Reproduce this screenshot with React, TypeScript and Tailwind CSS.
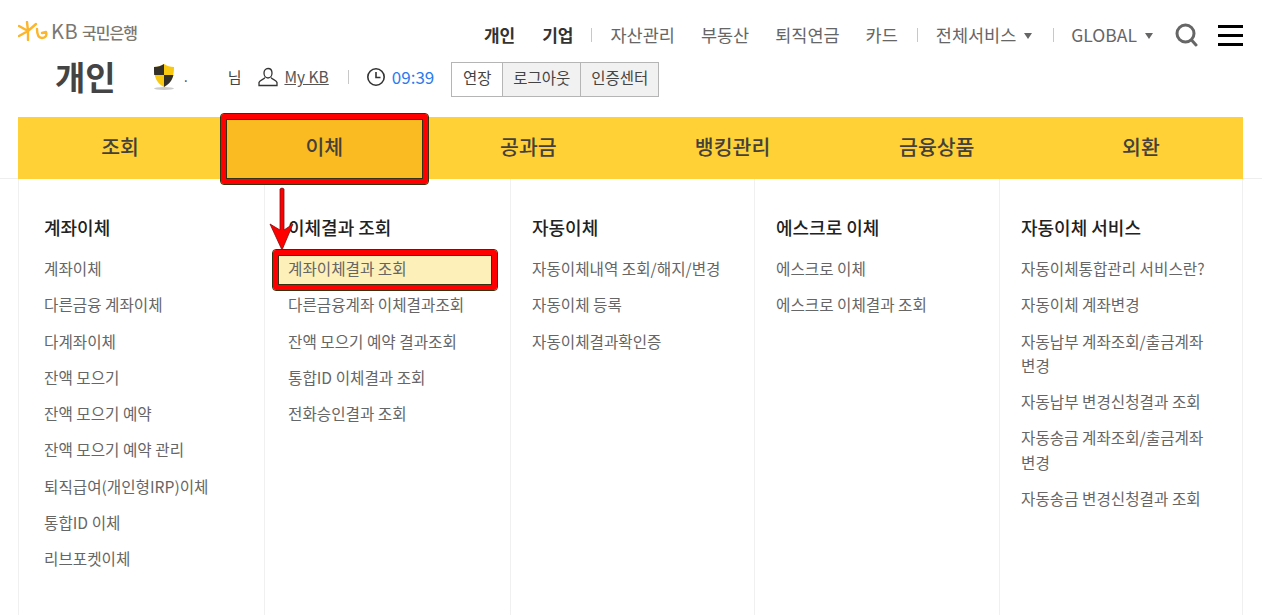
// App.tsx
const font = { fontFamily: '"Noto Sans CJK KR", "Noto Sans", sans-serif' };

const topMenu = ['자산관리', '부동산', '퇴직연금', '카드'];
const mainMenu = ['조회', '이체', '공과금', '뱅킹관리', '금융상품', '외환'];

const columns = [
  {
    title: '계좌이체',
    width: 'w-[246px] pl-[25px] border-l',
    items: ['계좌이체', '다른금융 계좌이체', '다계좌이체', '잔액 모으기', '잔액 모으기 예약', '잔액 모으기 예약 관리', '퇴직급여(개인형IRP)이체', '통합ID 이체', '리브포켓이체'],
  },
  {
    title: '이체결과 조회',
    width: 'w-[246px] pl-[23px] border-l',
    items: ['계좌이체결과 조회', '다른금융계좌 이체결과조회', '잔액 모으기 예약 결과조회', '통합ID 이체결과 조회', '전화승인결과 조회'],
  },
  {
    title: '자동이체',
    width: 'w-[244px] pl-[21px] border-l',
    items: ['자동이체내역 조회/해지/변경', '자동이체 등록', '자동이체결과확인증'],
  },
  {
    title: '에스크로 이체',
    width: 'w-[245px] pl-[21px] border-l',
    items: ['에스크로 이체', '에스크로 이체결과 조회'],
  },
  {
    title: '자동이체 서비스',
    width: 'w-[244px] pl-[21px] border-x',
    items: ['자동이체통합관리 서비스란?', '자동이체 계좌변경', '자동납부 계좌조회/출금계좌 변경', '자동납부 변경신청결과 조회', '자동송금 계좌조회/출금계좌 변경', '자동송금 변경신청결과 조회'],
  },
];

function Sep() {
  return <span className="w-px h-[14px] bg-[#c8c8c8]" />;
}

function Caret() {
  return <span className="ml-[8px] mt-[2px] w-0 h-0 border-x-[4.5px] border-x-transparent border-t-[6px] border-t-[#666]" />;
}

function Logo() {
  return (
    <div className="flex items-center gap-[3px]">
      <svg width="30" height="20" viewBox="0 0 30 20" fill="none" stroke="#fbb62c" strokeWidth="2.4" strokeLinecap="round" strokeLinejoin="round">
        <path d="M1 5l9 5M1 15l9-5M10 10L9 1M10 10v9M10 10l8-7" />
        <path d="M19 8c0 5 1 9 5 9s5-3 4-6l-4 1" />
      </svg>
      <span className="flex items-baseline leading-none text-[#7c776f]">
        <span className="text-[20px] tracking-[0.5px]">KB</span>
        <span className="ml-[4px] text-[16px] font-medium tracking-[-1px]">국민은행</span>
      </span>
    </div>
  );
}

function ShieldIcon() {
  return (
    <svg width="24" height="28" viewBox="0 0 24 28">
      <ellipse cx="12" cy="25.5" rx="10" ry="1.5" fill="#ccc" />
      <path d="M12 1c3 2 6 3 10 3 0 9-2 16-10 20C4 20 2 13 2 4c4 0 7-1 10-3z" fill="#f9c811" />
      <path d="M12 1v11H2.2C2 9 2 7 2 4c4 0 7-1 10-3zM12 12h9.4c-1 5-4 9-9.4 12z" fill="#33302a" />
    </svg>
  );
}

function UserIcon() {
  return (
    <svg width="20" height="20" viewBox="0 0 20 20" fill="none" stroke="#333" strokeWidth="1.3">
      <path d="M10 1.5c2.5 0 4 2 4 4.5s-1.500 5-4 5-4-2.500-4-5 1.500-4.500 4-4.500z" />
      <path d="M7 10.500c-1 2-5.500 2.500-6 5v3h18v-3c-.5-2.500-5-3-6-5" />
    </svg>
  );
}

function ClockIcon() {
  return (
    <svg width="20" height="20" viewBox="0 0 20 20" fill="none" stroke="#333" strokeWidth="1.6">
      <circle cx="10" cy="10" r="8.200" />
      <path d="M10 5v5.500h4.500" />
    </svg>
  );
}

export default function App() {
  return (
    <div className="relative w-[1262px] h-[615px] overflow-hidden bg-white text-[#555]" style={font}>
      <header className="h-[117px] pl-[18px] pr-[19px] flex flex-col">
        <div className="flex items-start justify-between pt-[21px] h-[52px]">
          <Logo />
          <nav className="flex items-center h-[28px] text-[17.500px] text-[#666]">
            <a className="font-bold text-[17px] text-[#333]">개인</a>
            <a className="font-bold text-[17px] text-[#333] ml-[27px]">기업</a>
            <span className="mx-[18px] flex"><Sep /></span>
            {topMenu.map((m, i) => (
              <a key={m} className={i ? 'ml-[26px]' : ''}>{m}</a>
            ))}
            <span className="ml-[19px] mr-[18px] flex"><Sep /></span>
            <a className="flex items-center">전체서비스<Caret /></a>
            <span className="ml-[21px] mr-[17px] flex"><Sep /></span>
            <a className="flex items-center">GLOBAL<Caret /></a>
            <svg className="ml-[22px]" width="23" height="24" viewBox="0 0 23 24" fill="none" stroke="#666" strokeWidth="3">
              <circle cx="10.500" cy="10.500" r="8.500" />
              <path d="M16.500 17l4.500 5" strokeLinecap="round" />
            </svg>
            <span className="ml-[20px] w-[25px] flex flex-col gap-[6px]">
              <span className="h-[3px] bg-black" />
              <span className="h-[3px] bg-black" />
              <span className="h-[3px] bg-black" />
            </span>
          </nav>
        </div>
        <div className="flex items-center h-[45px] mt-[5px] pl-[37px]">
          <div className="flex items-center mb-[5px]">
            <h1 className="text-[33px] leading-none font-bold text-[#444] w-[97px] -mt-[2px]">개인</h1>
            <ShieldIcon />
            <span className="ml-[8px] text-[#333] text-[13px]">.</span>
            <span className="ml-[40px] text-[15px] text-[#444]">님</span>
            <span className="ml-[17px] flex items-center gap-[6px]">
              <UserIcon />
              <a className="underline text-[15.500px] text-[#555]">My KB</a>
            </span>
            <span className="ml-[19px] mr-[17px] flex"><Sep /></span>
            <ClockIcon />
            <span className="ml-[6px] text-[17px] text-[#2b7bf0]">09:39</span>
          </div>
          <div className="ml-[17px] flex h-[35px] border border-[#b5b5b5] text-[15.500px] text-[#444]">
            <button className="w-[50px] bg-white pb-[4px]">연장</button>
            <button className="w-[78px] bg-[#f1f1f1] border-l border-[#b5b5b5] pb-[4px]">로그아웃</button>
            <button className="w-[78px] bg-[#f1f1f1] border-l border-[#b5b5b5] pb-[4px]">인증센터</button>
          </div>
        </div>
      </header>

      <div className="h-[62px] border-b border-[#eee]">
        <ul className="mx-[18px] h-[62px] w-[1225px] grid grid-cols-6 bg-[#ffd137] text-[20.500px] font-medium text-[#44403a]">
          {mainMenu.map((m) => (
            <li key={m} className="relative flex items-center justify-center pb-[4px]">
              {m === '이체' && (
                <span className="absolute -left-[2px] -top-[4px] w-[209px] h-[72px] bg-[#fabb22] rounded-[4px] border border-[#331]">
                  <span className="block h-full border-[5px] border-[#ff0000] rounded-[3px]">
                    <span className="block h-full border border-[#331]" />
                  </span>
                </span>
              )}
              <span className="relative">{m}</span>
            </li>
          ))}
        </ul>
      </div>

      <div className="flex ml-[18px] h-[436px]">
        {columns.map((col) => (
          <section key={col.title} className={`${col.width} border-[#f0f0f0] pr-[14px] pt-[34px]`}>
            <h2 className="text-[18px] leading-[28px] font-medium text-[#222] mb-[10px]">{col.title}</h2>
            <ul className="text-[15.650px] leading-[24.300px] text-[#666] break-keep">
              {col.items.map((item, i) => (
                <li key={item} className="relative py-[6px]">
                  {col.title === '이체결과 조회' && i === 0 && (
                    <span className="absolute -left-[16px] -top-[2px] w-[226px] h-[42px] bg-[#fdf0b9] border border-[#331] rounded-[4px]">
                      <span className="block h-full border-[5px] border-[#ff0000] rounded-[3px]">
                        <span className="block h-full border border-[#331]" />
                      </span>
                    </span>
                  )}
                  <span className="relative">{item}</span>
                </li>
              ))}
            </ul>
          </section>
        ))}
      </div>

      <svg className="absolute left-[268px] top-[186px]" width="28" height="66" viewBox="0 0 28 66">
        <path d="M12 3q2-2 4 0v41l9-6L14 64 2 38l10 6z" fill="#ff0000" stroke="#7a1010" strokeWidth="0.800" />
      </svg>
    </div>
  );
}
